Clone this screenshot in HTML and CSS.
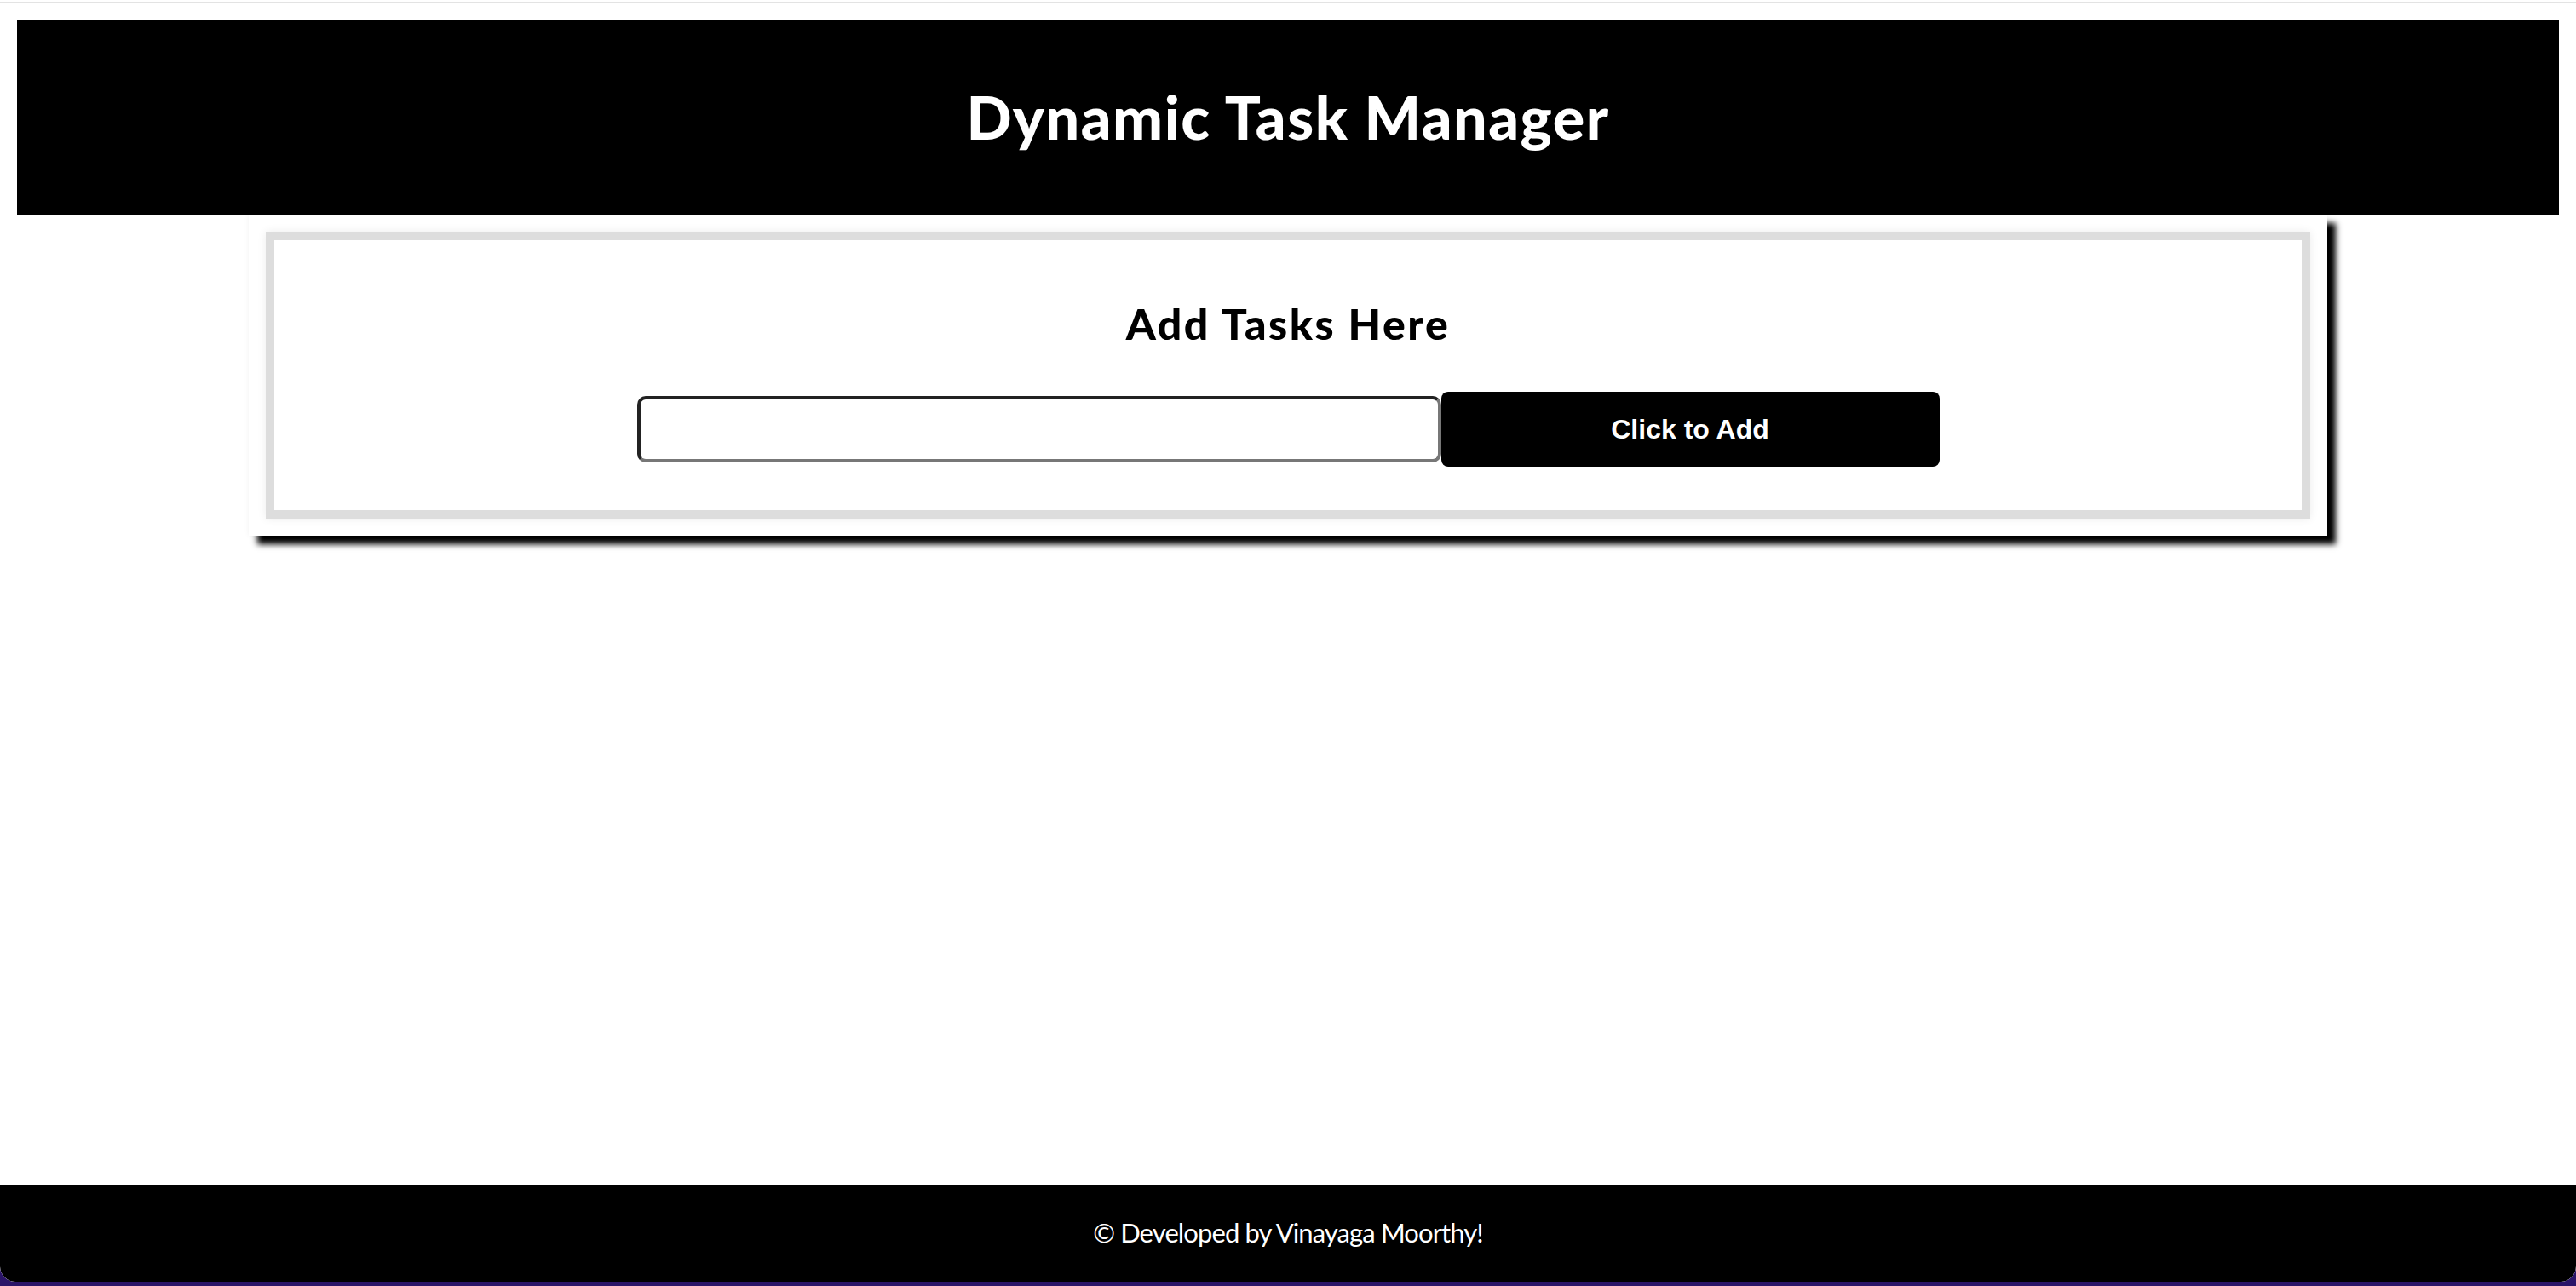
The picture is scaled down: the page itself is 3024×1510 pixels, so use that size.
FILE: index.html
```html
<!DOCTYPE html>
<html lang="en">
<head>
<meta charset="utf-8">
<title>Dynamic Task Manager</title>
<link rel="stylesheet" href="styles.css">
</head>
<body>
<div class="topline"></div>
<header class="header">
  <h1 class="title">Dynamic Task Manager</h1>
</header>
<main class="main">
  <section class="card">
    <div class="card-inner">
      <h2 class="card-title">Add Tasks Here</h2>
      <div class="form-row">
        <input class="task-input" type="text">
        <button class="add-btn" type="button">Click to Add</button>
      </div>
    </div>
  </section>
</main>
<footer class="footer">
  <p class="footer-text">© Developed by Vinayaga Moorthy!</p>
</footer>
</body>
</html>
```
FILE: styles.css
```css
html {
  background: #2a1468;
  margin: 0;
  padding: 0;
}

body {
  margin: 0;
  height: 1505px;
  background: #ffffff;
  border-radius: 0 0 18px 18px;
  overflow: hidden;
  display: flex;
  flex-direction: column;
  font-family: Lato, "Open Sans", sans-serif;
}

.topline {
  margin-top: 2px;
  height: 2px;
  background: #e3e3e3;
  flex: none;
}

.header {
  flex: none;
  margin: 20px 20px 0;
  height: 228px;
  background: #000;
  display: flex;
  justify-content: center;
  align-items: flex-start;
}

.title {
  margin: 0;
  padding-top: 71px;
  font-size: 70px;
  line-height: 1.2;
  font-weight: 900;
  color: #fff;
  letter-spacing: 1.5px;
}

.main {
  flex: 1;
}

.card {
  box-sizing: border-box;
  width: 2440px;
  height: 377px;
  margin: 0 auto;
  padding: 20px;
  background: #fff;
  box-shadow: 10px 10px 7px #000, 0 0 6px rgba(0, 0, 0, 0.06);
}

.card-inner {
  box-sizing: border-box;
  height: 100%;
  border: 10px solid #dddddd;
  box-shadow: 0 0 10px rgba(0, 0, 0, 0.08);
  display: flex;
  flex-direction: column;
  align-items: center;
}

.card-title {
  margin: 68px 0 0;
  font-size: 50px;
  line-height: 1.2;
  font-weight: 900;
  color: #000;
  letter-spacing: 2.5px;
}

.form-row {
  margin-top: 50px;
  display: flex;
  align-items: center;
}

.task-input {
  box-sizing: border-box;
  width: 944px;
  height: 78px;
  margin: 0;
  border: 4px solid #222;
  border-right-color: #777;
  border-bottom-color: #777;
  border-radius: 10px;
  background: #fff;
  outline: none;
}

.add-btn {
  box-sizing: border-box;
  width: 585px;
  height: 88px;
  margin: 0;
  border: none;
  border-radius: 8px;
  background: #000;
  color: #fff;
  font-family: "Liberation Sans", Arial, sans-serif;
  font-weight: 700;
  font-size: 32px;
}

.footer {
  flex: none;
  height: 114px;
  background: #000;
  border-radius: 0 0 18px 18px;
  display: flex;
  align-items: center;
  justify-content: center;
}

.footer-text {
  margin: 0;
  color: #fff;
  font-size: 31px;
  line-height: 1.2;
  letter-spacing: -0.9px;
}
```
